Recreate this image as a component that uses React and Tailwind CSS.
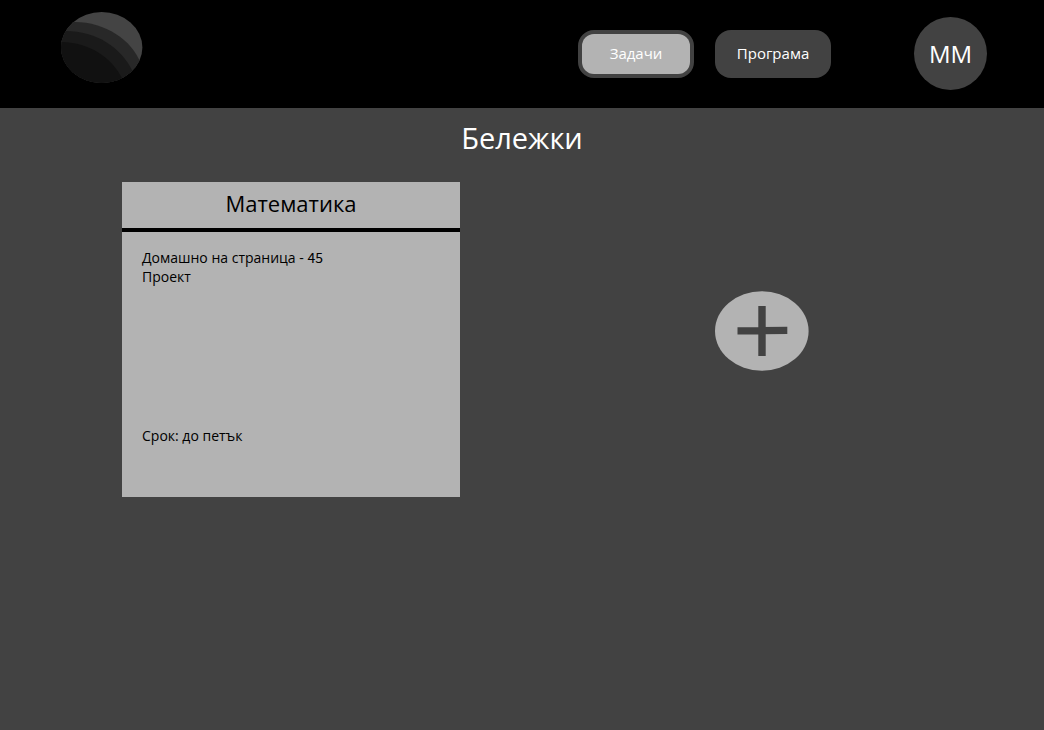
import React from "react";

function Logo() {
  return (
    <svg viewBox="0 0 82 71" className="w-[82px] h-[71px]" role="img" aria-label="Лого">
      <clipPath id="planet">
        <ellipse cx="40.7" cy="35.5" rx="40.7" ry="35.5" />
      </clipPath>
      <g clipPath="url(#planet)">
        <rect width="82" height="71" fill="#444444" />
        <path d="M-2 10 H14 C44 10 71 28 79.5 51 V80 H-2 Z" fill="#282828" />
        <path d="M-2 19 H5 C35 19 60 35 72 60 V80 H-2 Z" fill="#1a1a1a" />
        <path d="M-2 30 H1 C28 31 50 44 62 68 V80 H-2 Z" fill="#111111" />
      </g>
    </svg>
  );
}

function Note({ title, lines, due }) {
  return (
    <article className="flex w-[338px] min-h-[315px] flex-col bg-[#b3b3b3] text-black">
      <h2 className="border-b-4 border-black pt-1 pb-2 text-center text-[22px] leading-[34px]">{title}</h2>
      <div className="flex flex-1 flex-col justify-between px-5 pt-4 pb-[52px] text-sm leading-[19px]">
        <div>{lines}</div>
        <p>{due}</p>
      </div>
    </article>
  );
}

export default function App() {
  return (
    <div className="min-h-screen bg-[#424242] font-['Open_Sans',sans-serif] text-white">
      <header className="flex min-h-[108px] items-center bg-black pr-[57px] pb-px pl-[61px]">
        <a href="#" className="mt-3 self-start">
          <Logo />
        </a>
        <nav className="ml-auto flex gap-[21px] text-[15px]">
          <button type="button" className="h-12 w-[116px] rounded-2xl border-4 border-[#424242] bg-[#424242]">
            <span className="flex h-full items-center justify-center rounded-xl bg-[#b3b3b3]">Задачи</span>
          </button>
          <button type="button" className="h-12 w-[116px] rounded-2xl bg-[#424242]">Програма</button>
        </nav>
        <button type="button" className="ml-[83px] size-[73px] rounded-full bg-[#424242] text-2xl">ММ</button>
      </header>
      <main>
        <h1 className="pt-2 text-center text-[29px] leading-[44px]">Бележки</h1>
        <div className="mt-[22px] flex items-start pl-[122px]">
          <Note
            title="Математика"
            lines={
              <>
                <p>
                  Домашно на страница - <span className="font-['Noto_Sans_CJK_SC',sans-serif] leading-none">45</span>
                </p>
                <p>Проект</p>
              </>
            }
            due="Срок: до петък"
          />
          <div className="flex flex-1 justify-center pt-[109px] pl-5">
            <button type="button" aria-label="Добави бележка">
              <svg viewBox="0 0 94 80" className="h-20 w-[94px]" aria-hidden="true">
                <ellipse cx="46.8" cy="40" rx="46.8" ry="39.7" fill="#b3b3b3" />
                <path d="M43.3 15H50.7V65H43.3Z M22.5 36.3L72.3 35.8V43L22.5 43.6Z" fill="#424242" />
              </svg>
            </button>
          </div>
        </div>
      </main>
    </div>
  );
}
